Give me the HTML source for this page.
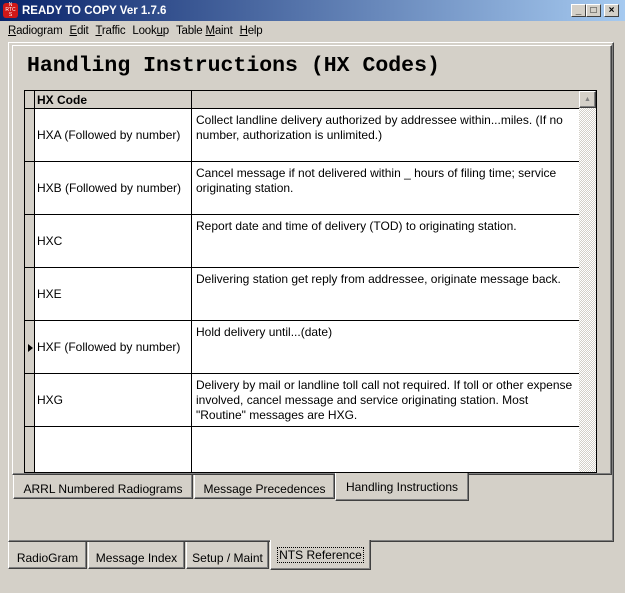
<!DOCTYPE html>
<html><head><style>
*{margin:0;padding:0;box-sizing:border-box}
body{width:625px;height:593px;background:#d4d0c8;font-family:"Liberation Sans",sans-serif;font-size:12px;position:relative;overflow:hidden;color:#000}
.a{position:absolute}
.title{left:0;top:0;width:625px;height:21px;background:linear-gradient(90deg,#0a246a,#a6caf0);color:#fff;font-weight:bold;font-size:11.5px;line-height:22px;padding-left:22px}
.btn{top:4px;width:15px;height:13px;background:#d4d0c8;border:1px solid;border-color:#fff #404040 #404040 #fff;font-size:10px;line-height:11px;text-align:center;color:#000;font-weight:bold}
.menu{top:22px;left:8px;font-size:11.5px;line-height:18px;letter-spacing:-0.2px}
.menu span{margin-right:7px}
.raised{border:1px solid;border-color:#fff #404040 #404040 #fff;box-shadow:inset -1px -1px #808080}
.tab{border:1px solid;border-color:#fff #404040 #404040 #fff;border-top:none;background:#d4d0c8;font-size:12px;text-align:center;line-height:20px;box-shadow:inset -1px -1px #808080}
.grid{left:24px;top:90px;width:573px;height:383px;background:#fff;border:1px solid #000;overflow:hidden}
.row{position:absolute;left:0;width:554px;border-bottom:1px solid #000}
.ind{position:absolute;left:0;top:0;width:10px;height:100%;background:#d4d0c8;border-right:1px solid #000}
.c1{position:absolute;left:10px;top:0;width:157px;height:100%;border-right:1px solid #000;padding-left:2px;display:flex;align-items:center}
.c2{position:absolute;left:167px;top:0;width:387px;padding:4px 4px;line-height:15px}
</style></head><body>
<div class="a title">READY TO COPY Ver 1.7.6</div>
<div class="a" style="left:3px;top:3px;width:15px;height:15px;background:#d01818;border-radius:3px;color:#fff;font-size:5px;line-height:5px;text-align:center">N<br>RTC<br>S</div>
<div class="a btn" style="left:571px">_</div>
<div class="a btn" style="left:586px">□</div>
<div class="a btn" style="left:604px">×</div>
<div class="a menu"><span><u>R</u>adiogram</span><span><u>E</u>dit</span><span><u>T</u>raffic</span><span>Look<u>u</u>p</span><span>Table <u>M</u>aint</span><span><u>H</u>elp</span></div>
<div class="a raised" style="left:8px;top:42px;width:606px;height:500px"></div>
<div class="a raised" style="left:12px;top:45px;width:600px;height:430px"></div>
<div class="a" style="left:27px;top:54px;font-family:'Liberation Mono',monospace;font-weight:bold;font-size:21.5px">Handling Instructions (HX Codes)</div>
<div class="a grid">
 <div class="row" style="top:0;height:18px;background:#d4d0c8"><div class="ind"></div><div class="c1" style="font-weight:bold;border-right:1px solid #000">HX Code</div></div>
 <div class="row" style="top:18px;height:53px"><div class="ind"></div><div class="c1">HXA (Followed by number)</div><div class="c2">Collect landline delivery authorized by addressee within...miles. (If no number, authorization is unlimited.)</div></div>
 <div class="row" style="top:71px;height:53px"><div class="ind"></div><div class="c1">HXB (Followed by number)</div><div class="c2">Cancel message if not delivered within _ hours of filing time; service originating station.</div></div>
 <div class="row" style="top:124px;height:53px"><div class="ind"></div><div class="c1">HXC</div><div class="c2">Report date and time of delivery (TOD) to originating station.</div></div>
 <div class="row" style="top:177px;height:53px"><div class="ind"></div><div class="c1">HXE</div><div class="c2">Delivering station get reply from addressee, originate message back.</div></div>
 <div class="row" style="top:230px;height:53px"><div class="ind"><div style="position:absolute;left:3px;top:23px;width:0;height:0;border-left:5px solid #000;border-top:4px solid transparent;border-bottom:4px solid transparent"></div></div><div class="c1">HXF (Followed by number)</div><div class="c2">Hold delivery until...(date)</div></div>
 <div class="row" style="top:283px;height:53px"><div class="ind"></div><div class="c1">HXG</div><div class="c2">Delivery by mail or landline toll call not required. If toll or other expense involved, cancel message and service originating station. Most "Routine" messages are HXG.</div></div>
 <div class="row" style="top:336px;height:60px;border:none"><div class="ind"></div><div class="c1"></div></div>
 <div class="a" style="left:554px;top:0;width:17px;height:383px;background:repeating-conic-gradient(#d4d0c8 0 25%,#fff 0 50%) 0 0/2px 2px"></div>
 <div class="a raised" style="left:554px;top:0;width:17px;height:17px;background:#d4d0c8;font-size:7px;text-align:center;line-height:15px;color:#808080">▲</div>
</div>
<div class="a tab" style="left:13px;top:475px;width:180px;height:24px;line-height:28px">ARRL Numbered Radiograms</div>
<div class="a tab" style="left:194px;top:475px;width:141px;height:24px;line-height:28px">Message Precedences</div>
<div class="a tab" style="left:335px;top:473px;width:134px;height:28px;line-height:28px;border-top:none">Handling Instructions</div>
<div class="a tab" style="left:8px;top:542px;width:79px;height:27px;line-height:32px">RadioGram</div>
<div class="a tab" style="left:88px;top:542px;width:97px;height:27px;line-height:32px">Message Index</div>
<div class="a tab" style="left:186px;top:542px;width:83px;height:27px;line-height:32px">Setup / Maint</div>
<div class="a tab" style="left:270px;top:540px;width:101px;height:30px;line-height:30px"><span style="outline:1px dotted #000;padding:0 1px">NTS Reference</span></div>
</body></html>
